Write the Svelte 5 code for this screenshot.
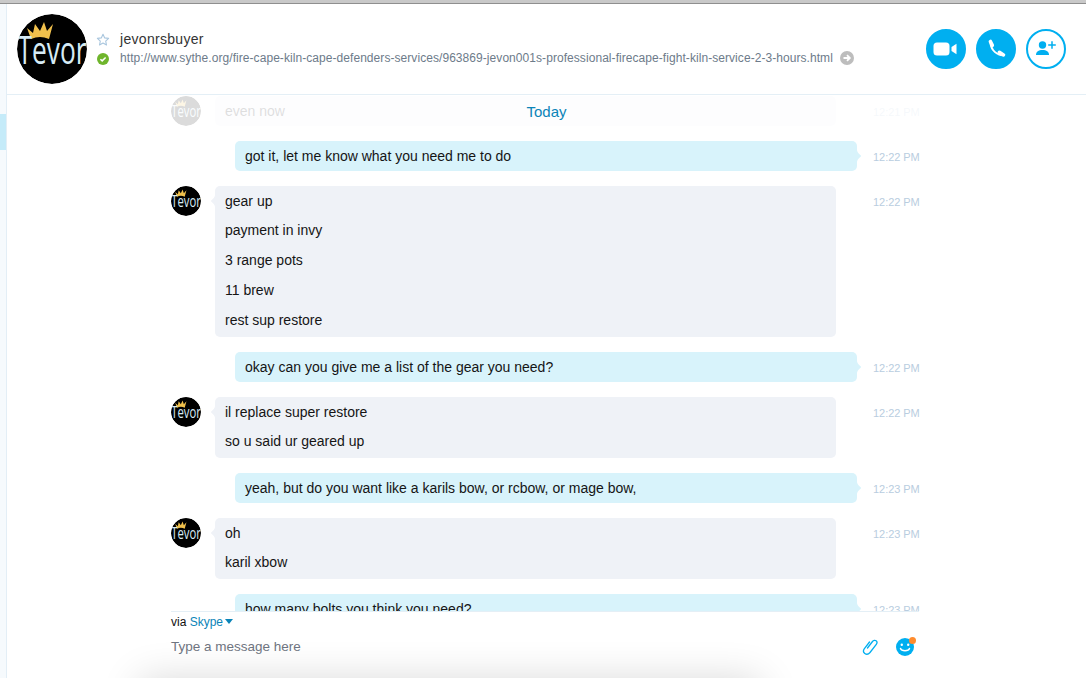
<script>
  const rows = [
    { who: 'other', time: '12:22 PM', lines: ['gear up', 'payment in invy', '3 range pots', '11 brew', 'rest sup restore'] },
    { who: 'self', time: '12:22 PM', lines: ['okay can you give me a list of the gear you need?'] },
    { who: 'other', time: '12:22 PM', lines: ['il replace super restore', 'so u said ur geared up'] },
    { who: 'self', time: '12:23 PM', lines: ['yeah, but do you want like a karils bow, or rcbow, or mage bow,'] },
    { who: 'other', time: '12:23 PM', lines: ['oh', 'karil xbow'] },
    { who: 'self', time: '12:23 PM', lines: ['how many bolts you think you need?'] }
  ];
</script>

{#snippet avatar(size)}
  <svg class="avatar" width={size} height={size} viewBox="0 0 70 70" aria-hidden="true">
    <circle cx="35" cy="35" r="35" fill="#000" />
    <path d="M10 14 L16 19 L18 10 L23 17 L27 8 L30 17 L36 10 L32 25 Q23 21 14 25 Z" fill="#f0c04c" />
    <text x="0.500" y="50" class="logo" textLength="69" lengthAdjust="spacingAndGlyphs">Tevor</text>
  </svg>
{/snippet}

{#snippet message(r)}
  <div class="row {r.who}">
    {#if r.who === 'other'}{@render avatar(30)}{:else}<span></span>{/if}
    <div class="bubble">
      {#if r.who === 'other'}
        <svg class="tail left" width="4" height="12" viewBox="0 0 4 12"><path d="M4 0C4 3 0 5 0 6C0 7 4 9 4 12Z" /></svg>
      {:else}
        <svg class="tail right" width="4" height="12" viewBox="0 0 4 12"><path d="M0 0C0 3 4 5 4 6C4 7 0 9 0 12Z" /></svg>
      {/if}
      {#each r.lines as line}<p>{line}</p>{/each}
    </div>
    <span></span>
    <time>{r.time}</time>
  </div>
{/snippet}

<div class="shell">
  <div class="chrome"></div>
  <div class="main">
    <aside class="rail"><div class="selected"></div></aside>
    <section class="conv">
      <header>
        {@render avatar(70)}
        <div class="marks">
          <svg width="14" height="14" viewBox="0 0 14 14"><path d="M7 1.300l1.700 3.600 3.900.5-2.900 2.700.8 3.900L7 10.100l-3.500 1.900.8-3.900L1.400 5.400l3.900-.5z" fill="none" stroke="#a9c6de" stroke-width="1.100" stroke-linejoin="round" /></svg>
          <svg width="12" height="12" viewBox="0 0 12 12"><circle cx="6" cy="6" r="6" fill="#6fb52c" /><path d="M3.400 6.200l1.800 1.700 3.400-3.400" fill="none" stroke="#fff" stroke-width="1.500" /></svg>
        </div>
        <div class="who">
          <div class="name">jevonrsbuyer</div>
          <div class="url">
            <span>http://www.sythe.org/fire-cape-kiln-cape-defenders-services/963869-jevon001s-professional-firecape-fight-kiln-service-2-3-hours.html</span>
            <svg width="14" height="14" viewBox="0 0 14 14"><circle cx="7" cy="7" r="7" fill="#bdbdbd" /><path d="M3.500 7h6M7 4.200L9.800 7 7 9.800" fill="none" stroke="#fff" stroke-width="1.800" /></svg>
          </div>
        </div>
        <div class="actions">
          <button class="call" aria-label="Video call">
            <svg width="26" height="16" viewBox="0 0 26 16"><rect x="0.500" y="1.500" width="16" height="13" rx="3.500" fill="#fff" /><path d="M18.500 6l5-3.200v10.400l-5-3.200z" fill="#fff" /></svg>
          </button>
          <button class="call" aria-label="Call">
            <svg width="20" height="20" viewBox="0 0 20 20"><path d="M4.600 3.200C4 8.500 8.500 15 15.800 16.200" fill="none" stroke="#fff" stroke-width="1.900" /><path d="M4.400 2.500L6.300 6.400M13.400 13.300L17.500 15.900" fill="none" stroke="#fff" stroke-width="3.600" stroke-linecap="round" /></svg>
          </button>
          <button class="call ghost" aria-label="Add people">
            <svg width="24" height="20" viewBox="0 0 24 20"><circle cx="8.500" cy="6" r="3.700" fill="#00aff0" /><path d="M2 16c0-3.500 2.500-5 6.500-5s6.500 1.500 6.500 5z" fill="#00aff0" /><path d="M18 2.200v7.600M14.200 6h7.600" stroke="#00aff0" stroke-width="1.500" fill="none" /></svg>
          </button>
        </div>
      </header>

      <div class="scroll">
        <div class="row other">
          {@render avatar(30)}
          <div class="bubble single"><p>even now</p></div>
          <span></span>
          <time>12:21 PM</time>
        </div>
        <div class="row self">
          <span></span>
          <div class="bubble">
            <svg class="tail right" width="4" height="12" viewBox="0 0 4 12"><path d="M0 0C0 3 4 5 4 6C4 7 0 9 0 12Z" /></svg>
            <p>got it, let me know what you need me to do</p>
          </div>
          <span></span>
          <time>12:22 PM</time>
        </div>
        {#each rows as r}{@render message(r)}{/each}
        <div class="today"><span>Today</span></div>
      </div>

      <footer>
        <div class="via">via <a href="#skype">Skype</a><i></i></div>
        <div class="compose">
          <span class="placeholder">Type a message here</span>
          <svg class="clip" width="18" height="18" viewBox="0 0 18 18"><path d="M6.500 10.500l5-6.500c1-1.300 2.600-1.500 3.600-.7s1.100 2.300.2 3.500L9 15c-1.500 1.800-3.700 2.100-5.200 1s-1.600-3.200-.4-4.900L8.500 4.500" transform="translate(0 -.5)" fill="none" stroke="#00aff0" stroke-width="1.300" stroke-linecap="round" /></svg>
          <svg class="smile" width="20" height="20" viewBox="0 0 20 20"><circle cx="9" cy="10" r="9" fill="#00aff0" /><circle cx="5.800" cy="7.800" r="1.200" fill="#fff" /><circle cx="12.200" cy="7.800" r="1.200" fill="#fff" /><path d="M4.500 11.500c1 3 8 3 9 0" fill="none" stroke="#fff" stroke-width="1.400" stroke-linecap="round" /><circle cx="16.500" cy="3.500" r="3.500" fill="#ff8c2e" /></svg>
        </div>
      </footer>
    </section>
  </div>
  <div class="under"></div>
</div>

<style>
  :global(body) { margin: 0; background: #fff; }
  .shell {
    position: relative;
    height: 678px;
    overflow: hidden;
    display: flex;
    flex-direction: column;
    font-family: "Liberation Sans", Arial, sans-serif;
    color: #111;
    background: #fff;
  }
  .chrome { height: 3px; flex: none; background: #c9c9c9; border-bottom: 1px solid #8f8f8f; }
  .main { flex: 1; min-height: 0; display: flex; }
  .rail { width: 6px; flex: none; background: #f6fafd; border-right: 1px solid #e3eef6; padding-top: 110px; }
  .selected { height: 36px; background: #c5ebf9; }
  .conv { flex: 1; min-width: 0; display: flex; flex-direction: column; }

  header {
    height: 90px;
    flex: none;
    display: flex;
    align-items: center;
    padding: 0 20px 0 10px;
    border-bottom: 1px solid #e4eff6;
  }
  .avatar { display: block; border-radius: 50%; flex: none; }
  .logo { font-family: "Open Sans", sans-serif; font-size: 38px; fill: #d6ebf5; }
  .marks { margin-left: 9px; width: 14px; display: flex; flex-direction: column; align-items: center; gap: 6px; padding-top: 0; }
  .who { margin-left: 10px; flex: 1; min-width: 0; margin-bottom: 2px; }
  .name { font-size: 14px; line-height: 18px; color: #333; letter-spacing: .3px; }
  .url { display: flex; align-items: center; gap: 7px; margin-top: 2px; font-size: 12px; line-height: 16px; letter-spacing: .06px; color: #6d7b8a; white-space: nowrap; }
  .url svg { flex: none; }
  .actions { display: flex; gap: 10px; }
  .call {
    width: 40px; height: 40px; padding: 0; border: 2px solid #00aff0; border-radius: 50%;
    background: #00aff0; display: flex; align-items: center; justify-content: center;
  }
  .ghost { background: #fff; }

  .scroll {
    position: relative;
    flex: 1;
    min-height: 0;
    overflow: hidden;
    padding: 1px 0 0 164px;
    display: flex;
    flex-direction: column;
    gap: 15px;
  }
  .row { display: grid; flex: none; width: 748px; font-size: 14px; }
  .row.other { grid-template-columns: 44px 621px 37px 1fr; }
  .row.self { grid-template-columns: 64px 622px 16px 1fr; }
  .bubble { position: relative; border-radius: 5px; padding: 7px 10px 9px; display: flex; flex-direction: column; gap: 14px; }
  .bubble p { margin: 0; line-height: 16px; color: #151515; }
  .bubble p:first-of-type { margin-bottom: -1px; }
  .other .bubble { background: #eff2f7; }
  .self .bubble { background: #d8f3fb; padding-bottom: 8px; }
  .other .bubble.single { padding-bottom: 8px; }
  .tail { position: absolute; top: 9px; }
  .tail.left { left: -4px; fill: #eff2f7; }
  .tail.right { right: -4px; fill: #d8f3fb; }
  time { font-size: 11px; line-height: 16px; padding-top: 8px; color: #b9cde0; white-space: nowrap; letter-spacing: -.05px; }

  .today {
    position: absolute; left: 0; right: 0; top: 0; height: 38px;
    background: rgba(255, 255, 255, .86);
    display: flex; align-items: center; justify-content: center;
    padding-bottom: 5px; box-sizing: border-box;
  }
  .today span { font-size: 15px; color: #0b84b8; }

  footer { height: 67px; flex: none; margin-left: 164px; width: 748px; border-top: 1px solid #e4eff6; position: relative; z-index: 1; box-sizing: border-box; }
  .via { font-size: 12px; line-height: 14px; padding-top: 3px; color: #111; }
  .via a { color: #0b84b8; text-decoration: none; }
  .via i { display: inline-block; margin-left: 2px; vertical-align: 2px; border: 4px solid transparent; border-top: 5px solid #0b84b8; border-bottom: 0; }
  .compose { display: flex; align-items: center; margin-top: 8px; }
  .placeholder { flex: 1; font-size: 13.500px; line-height: 18px; color: #6e7480; }
  .clip { flex: none; margin-right: 17px; }
  .smile { flex: none; margin-right: 3px; }

  .under {
    position: absolute; left: 150px; width: 600px; top: 690px; height: 40px;
    box-shadow: 0 0 40px 10px rgba(0, 0, 0, .16);
  }
</style>
